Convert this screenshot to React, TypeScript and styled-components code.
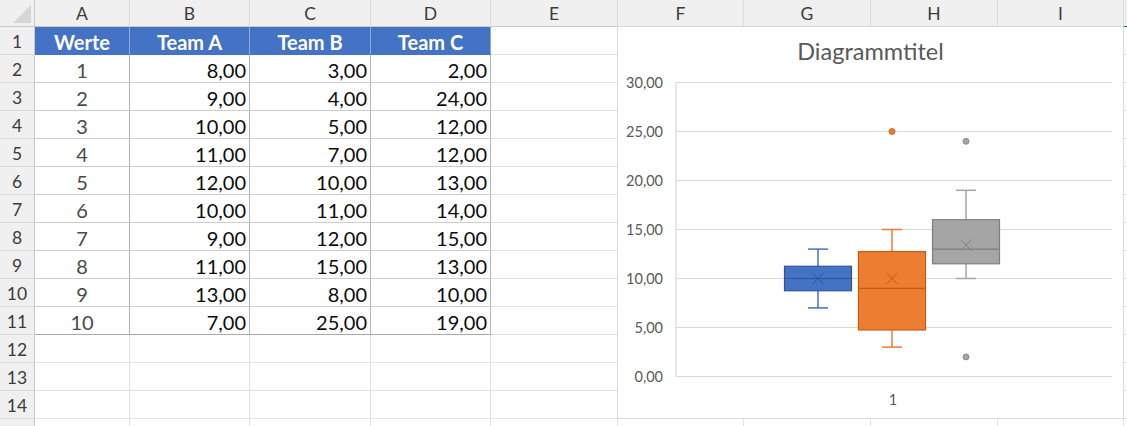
import React from 'react'
import styled, { createGlobalStyle } from 'styled-components'

const GlobalStyle = createGlobalStyle`
  html, body {
    margin: 0;
    padding: 0;
    background: #fff;
    overflow: hidden;
  }
  body {
    font-family: Lato, 'Liberation Sans', Arial, sans-serif;
  }
`

const COLUMNS = ['A', 'B', 'C', 'D', 'E', 'F', 'G', 'H', 'I', 'J']
// rows beyond the window edge are laid out but not labelled
const VISIBLE_ROWS = 14
const ROW_COUNT = 15
const VISIBLE_COLS = 9

const teams = [
  { name: 'Team A', values: [8, 9, 10, 11, 12, 10, 9, 11, 13, 7], fill: '#4472c4', line: '#2f5597' },
  { name: 'Team B', values: [3, 4, 5, 7, 10, 11, 12, 15, 8, 25], fill: '#ed7d31', line: '#c55a11' },
  { name: 'Team C', values: [2, 24, 12, 12, 13, 14, 15, 13, 10, 19], fill: '#a5a5a5', line: '#7f7f7f' },
]

const fmt = (n: number) => n.toFixed(2).replace('.', ',')

const Sheet = styled.div`
  position: relative;
  width: 1127px;
  height: 426px;
  overflow: hidden;
  display: grid;
  grid-template-columns: 35px 95px 120px 121px 120px 127px 126px 127px 127px 126px 60px;
  grid-template-rows: 27px;
  grid-auto-rows: 28px;
  font-family: Lato, 'Liberation Sans', Arial, sans-serif;
`

const Corner = styled.div`
  position: relative;
  background: #f0f0f0;
  border-right: 1px solid #c8c8c8;
  border-bottom: 1px solid #c8c8c8;
  box-sizing: border-box;

  &::after {
    content: '';
    position: absolute;
    right: 3px;
    bottom: 3px;
    width: 0;
    height: 0;
    border-left: 18px solid transparent;
    border-bottom: 18px solid #d6d6d6;
  }
`

const ColHead = styled.div<{ $active?: boolean }>`
  display: flex;
  align-items: center;
  justify-content: center;
  background: #f0f0f0;
  color: #3c3c3c;
  font-size: 17.5px;
  box-sizing: border-box;
  border-right: 1px solid #dadada;
  border-bottom: 1px solid ${(p) => (p.$active ? '#217346' : '#c8c8c8')};
`

const RowHead = styled.div`
  display: flex;
  align-items: center;
  justify-content: center;
  padding-top: 1px;
  background: #f0f0f0;
  color: #3c3c3c;
  font-size: 17.5px;
  box-sizing: border-box;
  border-right: 1px solid #c8c8c8;
  border-bottom: 1px solid #dadada;
`

type CellKind = 'title' | 'table' | 'plain'

const Cell = styled.div<{ $kind: CellKind; $align: 'center' | 'right'; $last?: boolean; $muted?: boolean }>`
  display: flex;
  align-items: center;
  justify-content: ${(p) => (p.$align === 'right' ? 'flex-end' : 'center')};
  padding: 3px 3px 0 3px;
  box-sizing: border-box;
  font-size: 20px;
  white-space: nowrap;
  overflow: hidden;
  background: ${(p) => (p.$kind === 'title' ? '#4472c4' : '#fff')};
  color: ${(p) => (p.$kind === 'title' ? '#fff' : p.$muted ? '#4a4a4a' : '#0c0c0c')};
  font-weight: ${(p) => (p.$kind === 'title' ? 700 : 400)};
  border-right: 1px solid
    ${(p) => (p.$kind === 'title' ? '#8ea9db' : p.$kind === 'table' ? '#b4b4b4' : '#e1e1e1')};
  border-bottom: 1px solid
    ${(p) =>
      p.$kind === 'title' ? '#4472c4' : p.$kind === 'table' ? (p.$last ? '#a9a9a9' : '#cdcdcd') : '#e1e1e1'};
`

const ChartFrame = styled.div`
  position: absolute;
  left: 617px;
  top: 26px;
  width: 507px;
  height: 393px;
  box-sizing: border-box;
  border: 1px solid #d9d9d9;
  background: #fff;
  display: flex;
  flex-direction: column;
`

const ChartTitle = styled.div`
  height: 45px;
  display: flex;
  align-items: center;
  justify-content: center;
  padding-top: 3px;
  box-sizing: border-box;
  font-size: 23.5px;
  color: #595959;
`

const Plot = styled.svg`
  display: block;
  font-family: Lato, 'Liberation Sans', Arial, sans-serif;
`

// exclusive quartiles, the way Excel's box plot computes them
const quartile = (sorted: number[], q: number) => {
  const pos = q * (sorted.length + 1) - 1
  const lo = Math.floor(pos)
  const frac = pos - lo
  const a = sorted[Math.max(0, lo)]
  const b = sorted[Math.min(sorted.length - 1, lo + 1)]
  return a + (b - a) * frac
}

const boxStats = (values: number[]) => {
  const s = [...values].sort((a, b) => a - b)
  const q1 = quartile(s, 0.25)
  const q3 = quartile(s, 0.75)
  const med = quartile(s, 0.5)
  const iqr = q3 - q1
  const inside = s.filter((v) => v >= q1 - 1.5 * iqr && v <= q3 + 1.5 * iqr)
  return {
    q1,
    q3,
    med,
    mean: s.reduce((a, b) => a + b, 0) / s.length,
    low: inside[0],
    high: inside[inside.length - 1],
    outliers: s.filter((v) => !inside.includes(v)),
  }
}

const PLOT_LEFT = 676
const PLOT_RIGHT = 1112
const y = (v: number) => 376.5 - v * 9.8

const BoxChart = () => {
  const ticks = [0, 5, 10, 15, 20, 25, 30]
  return (
    <Plot width={505} height={346} viewBox="618 72 505 346">
      {ticks.map((t) => (
        <g key={t}>
          <line x1={PLOT_LEFT} x2={PLOT_RIGHT} y1={y(t)} y2={y(t)} stroke="#d9d9d9" strokeWidth={1.2} />
          <text x={663} y={y(t) + 5} textAnchor="end" fontSize={14.5} fill="#595959">
            {fmt(t)}
          </text>
        </g>
      ))}
      <line x1={PLOT_LEFT} x2={PLOT_LEFT} y1={y(30)} y2={y(0)} stroke="#d9d9d9" strokeWidth={1.2} />
      {teams.map((team, i) => {
        const st = boxStats(team.values)
        const cx = 818 + i * 74
        const half = 33.5
        return (
          <g key={team.name}>
            <line x1={cx} x2={cx} y1={y(st.high)} y2={y(st.q3)} stroke={team.fill} strokeWidth={1.5} />
            <line x1={cx} x2={cx} y1={y(st.q1)} y2={y(st.low)} stroke={team.fill} strokeWidth={1.5} />
            <line x1={cx - 10} x2={cx + 10} y1={y(st.high)} y2={y(st.high)} stroke={team.fill} strokeWidth={1.5} />
            <line x1={cx - 10} x2={cx + 10} y1={y(st.low)} y2={y(st.low)} stroke={team.fill} strokeWidth={1.5} />
            <rect
              x={cx - half}
              y={y(st.q3)}
              width={half * 2}
              height={y(st.q1) - y(st.q3)}
              fill={team.fill}
              stroke={team.line}
              strokeWidth={1.2}
            />
            <line x1={cx - half} x2={cx + half} y1={y(st.med)} y2={y(st.med)} stroke={team.line} strokeWidth={1.2} />
            <path
              d={`M${cx - 5.5} ${y(st.mean) - 5.5} L${cx + 5.5} ${y(st.mean) + 5.5} M${cx + 5.5} ${y(st.mean) - 5.5} L${cx - 5.5} ${y(st.mean) + 5.5}`}
              stroke={team.line}
              strokeWidth={1}
              fill="none"
            />
            {st.outliers.map((o) => (
              <circle key={o} cx={cx} cy={y(o)} r={3} fill={team.fill} stroke={team.line} strokeWidth={0.8} />
            ))}
          </g>
        )
      })}
      <text x={893} y={405} textAnchor="middle" fontSize={14.5} fill="#595959">
        1
      </text>
    </Plot>
  )
}

const cellFor = (row: number, col: number) => {
  // row 1 holds the table header, rows 2-11 the data, columns A-D
  const inTable = row <= 11 && col <= 3
  if (!inTable) return <Cell key={`${row}-${col}`} $kind="plain" $align="center" />
  if (row === 1) {
    const label = col === 0 ? 'Werte' : teams[col - 1].name
    return (
      <Cell key={`${row}-${col}`} $kind="title" $align="center">
        {label}
      </Cell>
    )
  }
  const idx = row - 2
  if (col === 0) {
    return (
      <Cell key={`${row}-${col}`} $kind="table" $align="center" $muted $last={row === 11}>
        {idx + 1}
      </Cell>
    )
  }
  return (
    <Cell key={`${row}-${col}`} $kind="table" $align="right" $last={row === 11}>
      {fmt(teams[col - 1].values[idx])}
    </Cell>
  )
}

const App: React.FC = () => {
  const rows = Array.from({ length: ROW_COUNT }, (_, i) => i + 1)
  return (
    <>
      <GlobalStyle />
      <Sheet>
        <Corner />
        {COLUMNS.map((c, ci) => (
          <ColHead key={c} $active={c === 'J'}>
            {ci < VISIBLE_COLS ? c : null}
          </ColHead>
        ))}
        {rows.map((r) => (
          <React.Fragment key={r}>
            <RowHead>{r <= VISIBLE_ROWS ? r : null}</RowHead>
            {COLUMNS.map((_, ci) => cellFor(r, ci))}
          </React.Fragment>
        ))}
        <ChartFrame>
          <ChartTitle>Diagrammtitel</ChartTitle>
          <BoxChart />
        </ChartFrame>
      </Sheet>
    </>
  )
}

export default App
